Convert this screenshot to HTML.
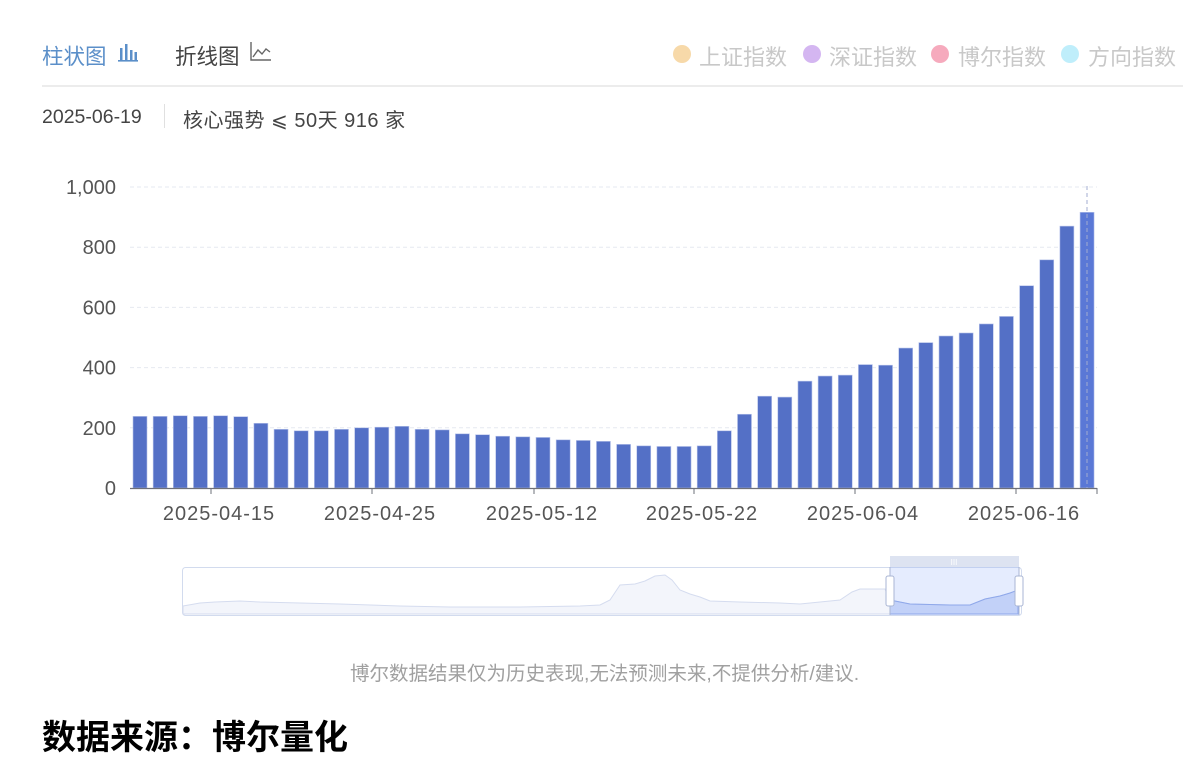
<!DOCTYPE html>
<html><head><meta charset="utf-8"><style>
body{margin:0;width:1200px;height:775px;background:#fff;font-family:"Liberation Sans","Noto Sans CJK SC",sans-serif;position:relative;overflow:hidden}
.a{position:absolute;white-space:nowrap}
</style></head><body>
<div class="a" style="left:42px;top:40px;font-size:21.5px;color:#5b8fc9">柱状图</div>
<svg class="a" style="left:118px;top:42px" width="22" height="22"><g fill="#5b8fc9"><rect x="2" y="6" width="2.5" height="12"/><rect x="7" y="2" width="2.5" height="16"/><rect x="12" y="8" width="2.5" height="10"/><rect x="16.5" y="10" width="2.5" height="8"/><rect x="0" y="18" width="20" height="1.6"/></g></svg>
<div class="a" style="left:175px;top:40px;font-size:21.5px;color:#444">折线图</div>
<svg class="a" style="left:249px;top:40px" width="24" height="24"><path d="M2 2V20H22M4 17L9 10L13 14L17 9L21 12" fill="none" stroke="#666" stroke-width="1.4"/></svg>
<div class="a" style="left:673px;top:45px;width:18px;height:18px;border-radius:50%;background:#f7d9a9"></div>
<div class="a" style="left:699px;top:40px;font-size:22px;color:#c8c8c8">上证指数</div>
<div class="a" style="left:803px;top:45px;width:18px;height:18px;border-radius:50%;background:#d4b6f1"></div>
<div class="a" style="left:829px;top:40px;font-size:22px;color:#c8c8c8">深证指数</div>
<div class="a" style="left:931px;top:45px;width:18px;height:18px;border-radius:50%;background:#f6aabd"></div>
<div class="a" style="left:958px;top:40px;font-size:22px;color:#c8c8c8">博尔指数</div>
<div class="a" style="left:1061px;top:45px;width:18px;height:18px;border-radius:50%;background:#bfeefb"></div>
<div class="a" style="left:1088px;top:40px;font-size:22px;color:#c8c8c8">方向指数</div>
<div class="a" style="left:42px;top:85px;width:1141px;height:2px;background:#ececec"></div>
<div class="a" style="left:42px;top:106px;font-size:19.5px;color:#444">2025-06-19</div>
<div class="a" style="left:164px;top:104px;width:1px;height:24px;background:#e0e0e0"></div>
<div class="a" style="left:183px;top:104px;font-size:20px;color:#444;letter-spacing:0.5px">核心强势 ⩽ 50天 916 家</div>
<svg class="a" style="left:0;top:0" width="1200" height="650" id="c"></svg>
<div class="a" style="left:350px;top:657px;font-size:19.5px;color:#a0a0a0">博尔数据结果仅为历史表现,无法预测未来,不提供分析/建议.</div>
<div class="a" style="left:42px;top:710px;font-size:34px;font-weight:bold;color:#000">数据来源：博尔量化</div>
<script>
var v=[238,238,240,238,240,237,215,195,190,190,195,200,202,205,195,193,180,177,172,170,168,160,158,155,145,140,138,138,140,190,245,305,302,355,372,375,410,408,465,483,505,515,545,570,672,758,870,916];
var s='';
[0,200,400,600,800,1000].forEach(function(t){var y=488-t*0.301;
 if(t)s+='<line x1="130" x2="1097" y1="'+y+'" y2="'+y+'" stroke="#e6e9f0" stroke-dasharray="4 3"/>';
 s+='<text x="116" y="'+(y+7)+'" text-anchor="end" font-size="20" fill="#555">'+(t==1000?'1,000':t)+'</text>';});
v.forEach(function(d,i){var x=130+i*20.15+3,h=d*0.301;
 s+='<rect x="'+x+'" y="'+(488-h)+'" width="14" height="'+h+'" fill="'+(i==47?'#5a78d6':'#5470c6')+'" stroke="#b7c3ea" stroke-width="0.6"/>';});
s+='<line x1="130" x2="1097" y1="488.5" y2="488.5" stroke="#6e7079" stroke-width="1.2"/>';
[[211,'2025-04-15'],[372,'2025-04-25'],[534,'2025-05-12'],[694,'2025-05-22'],[855,'2025-06-04'],[1016,'2025-06-16']].forEach(function(a){
 s+='<line x1="'+a[0]+'" x2="'+a[0]+'" y1="488" y2="494" stroke="#6e7079"/>';
 s+='<text x="'+(a[0]+8)+'" y="520" text-anchor="middle" font-size="20" letter-spacing="1" fill="#555">'+a[1]+'</text>';});
s+='<line x1="1097" x2="1097" y1="488" y2="494" stroke="#6e7079"/>';
s+='<line x1="1087" x2="1087" y1="186" y2="488" stroke="#a3acd0" stroke-dasharray="4 3"/>';
s+='<rect x="182.5" y="567.5" width="839" height="48" rx="3" fill="#fff" stroke="#d2dbee"/>';
var p='M183 606 L200 603 L215 602 L240 601 L260 602 L300 603 L340 604 L400 606 L450 607 L520 607 L580 606 L600 605 L610 600 L620 585 L635 584 L645 581 L655 576 L665 575 L672 580 L680 590 L690 594 L700 597 L710 601 L740 602 L780 603 L800 604 L820 602 L840 600 L852 592 L860 589 L875 589 L885 589 L890 600 L910 604 L950 605 L970 605 L985 599 L1000 596 L1010 593 L1018 590 L1018 614 L183 614Z';
s+='<path d="'+p+'" fill="#f3f5fb" stroke="#d5dcef" stroke-width="1"/>';
s+='<rect x="890" y="567" width="129" height="48" fill="rgba(135,170,250,0.22)"/>';
s+='<path d="M890 600 L910 604 L950 605 L970 605 L985 599 L1000 596 L1010 593 L1018 590 L1018 614 L890 614Z" fill="rgba(120,150,240,0.25)" stroke="#8fa8ea"/>';
s+='<rect x="890" y="556" width="129" height="11" fill="#dde3f1"/>';
s+='<text x="954" y="565" text-anchor="middle" font-size="8" fill="#fff">III</text>';
s+='<line x1="890" x2="890" y1="567" y2="615" stroke="#aab6d4"/><line x1="1019" x2="1019" y1="567" y2="615" stroke="#aab6d4"/>';
s+='<rect x="886" y="576" width="8" height="30" rx="2" fill="#fff" stroke="#aab6d4"/><rect x="1015" y="576" width="8" height="30" rx="2" fill="#fff" stroke="#aab6d4"/>';
document.getElementById('c').innerHTML=s;
</script>
</body></html>
